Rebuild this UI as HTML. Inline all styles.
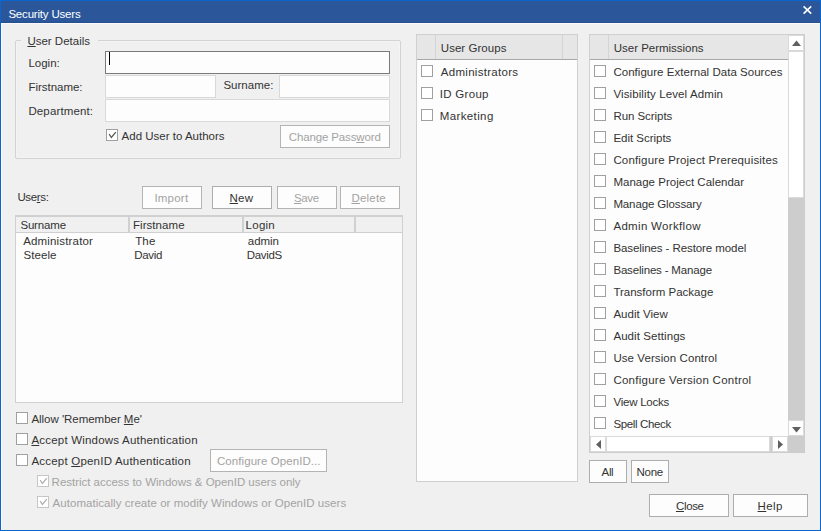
<!DOCTYPE html>
<html><head><meta charset="utf-8"><style>
html,body{margin:0;padding:0;width:821px;height:531px;overflow:hidden;background:#f0f0f0}
body{position:relative;font-family:"Liberation Sans",sans-serif;font-size:11.5px}
.a{position:absolute;box-sizing:content-box}
.t{position:absolute;white-space:nowrap;line-height:14px}
u{text-decoration:underline;text-underline-offset:1px}
</style></head><body>
<div class="a" style="left:0px;top:0px;width:821px;height:531px;background:#f0f0f0;"></div>
<div class="a" style="left:0px;top:0px;width:821px;height:1px;background:#0a66cc;"></div>
<div class="a" style="left:0px;top:0px;width:1px;height:531px;background:#0a66cc;"></div>
<div class="a" style="left:820px;top:0px;width:1px;height:531px;background:#0a66cc;"></div>
<div class="a" style="left:0px;top:530px;width:821px;height:1px;background:#0a66cc;"></div>
<div class="a" style="left:1px;top:1px;width:819px;height:22px;background:#2b579a;"></div>
<div class="a" style="left:1px;top:22px;width:819px;height:1px;background:#28508f;"></div>
<div class="a" style="left:1px;top:23px;width:819px;height:1px;background:#fbfbfb;"></div>
<div class="a" style="left:1px;top:23px;width:1px;height:507px;background:#fbfbfb;"></div>
<div class="t" id="t1" style="left:8.40px;top:6.81px;color:#fff;letter-spacing:-0.192px;">Security Users</div>
<svg class="a" style="left:802px;top:5px" width="11" height="10" viewBox="0 0 11 10"><path d="M1.6 1.4 L9.2 8.6 M9.2 1.4 L1.6 8.6" stroke="#fff" stroke-width="1.6" fill="none"/></svg>
<div class="a" style="left:15px;top:40px;width:384px;height:117px;border:1px solid #d3d3d3;border-radius:2px;box-shadow:inset 0 0 0 1px #f4f4f4"></div>
<div class="a" style="left:21px;top:39px;width:77px;height:3px;background:#f0f0f0;"></div>
<div class="t" id="t2" style="left:27.40px;top:34.01px;color:#333;"><u>U</u>ser Details</div>
<div class="t" id="t3" style="left:28.40px;top:56.01px;color:#333;">Login:</div>
<div class="a" style="left:105px;top:51px;width:283px;height:21px;border:1px solid #7a7a7a;background:#fdfdfd;"></div>
<div class="a" style="left:109px;top:52px;width:1px;height:13px;background:#000;"></div>
<div class="t" id="t4" style="left:28.40px;top:80.01px;color:#333;letter-spacing:-0.022px;">Firstname:</div>
<div class="a" style="left:105px;top:75px;width:109px;height:21px;border:1px solid #d9d9d9;background:#fdfdfd;"></div>
<div class="t" id="t5" style="left:223.40px;top:78.01px;color:#333;letter-spacing:0.029px;">Surname:</div>
<div class="a" style="left:279px;top:75px;width:109px;height:21px;border:1px solid #d9d9d9;background:#fdfdfd;"></div>
<div class="t" id="t6" style="left:28.40px;top:103.71px;color:#333;letter-spacing:0.140px;">Department:</div>
<div class="a" style="left:105px;top:99px;width:283px;height:21px;border:1px solid #d9d9d9;background:#fdfdfd;"></div>
<div class="a" style="left:106px;top:129px;width:10px;height:10px;border:1px solid #a0a0a0;background:#fff;"></div>
<svg class="a" style="left:106px;top:129px" width="12" height="12" viewBox="0 0 12 12"><path d="M3.2 5.2 L5.4 8.5 L9.8 3.2" fill="none" stroke="#555" stroke-width="1.25"/></svg>
<div class="t" id="t7" style="left:121.60px;top:128.81px;color:#333;letter-spacing:0.000px;">Add User to Authors</div>
<div class="a" style="left:280px;top:125px;width:108px;height:21px;border:1px solid #b4b4b4;background:#fdfdfd;"></div>
<div class="t" id="t8" style="left:288.80px;top:130.01px;color:#a3a3a3;letter-spacing:-0.143px;">Change Pass<u>w</u>ord</div>
<div class="t" id="t9" style="left:17.40px;top:190.21px;color:#333;letter-spacing:-0.350px;">Use<u>r</u>s:</div>
<div class="a" style="left:142px;top:186px;width:58px;height:21px;border:1px solid #b4b4b4;background:#fdfdfd;"></div>
<div class="t" id="t10" style="left:154.40px;top:190.61px;color:#a3a3a3;letter-spacing:0.220px;">Import</div>
<div class="a" style="left:212px;top:186px;width:58px;height:21px;border:1px solid #adadad;background:#fdfdfd;"></div>
<div class="t" id="t11" style="left:229.60px;top:190.71px;color:#333;letter-spacing:0.200px;"><u>N</u>ew</div>
<div class="a" style="left:277px;top:186px;width:58px;height:21px;border:1px solid #b4b4b4;background:#fdfdfd;"></div>
<div class="t" id="t12" style="left:294.00px;top:190.71px;color:#a3a3a3;letter-spacing:-0.350px;"><u>S</u>ave</div>
<div class="a" style="left:340px;top:186px;width:58px;height:21px;border:1px solid #b4b4b4;background:#fdfdfd;"></div>
<div class="t" id="t13" style="left:351.40px;top:190.71px;color:#a3a3a3;letter-spacing:0.220px;"><u>D</u>elete</div>
<div class="a" style="left:15px;top:215px;width:386px;height:186px;border:1px solid #d0d0d0;background:#fdfdfd;"></div>
<div class="a" style="left:16px;top:216px;width:386px;height:16px;background:#f0f0f0;"></div>
<div class="a" style="left:16px;top:216px;width:386px;height:1px;background:#d0d0d0;"></div>
<div class="a" style="left:16px;top:232px;width:386px;height:1px;background:#d0d0d0;"></div>
<div class="a" style="left:128px;top:216px;width:2px;height:17px;background:#d0d0d0;"></div>
<div class="a" style="left:242px;top:216px;width:2px;height:17px;background:#d0d0d0;"></div>
<div class="a" style="left:354px;top:216px;width:2px;height:17px;background:#d0d0d0;"></div>
<div class="t" id="t14" style="left:20.40px;top:217.71px;color:#333;letter-spacing:-0.167px;">Surname</div>
<div class="t" id="t15" style="left:133.00px;top:217.71px;color:#333;letter-spacing:0.050px;">Firstname</div>
<div class="t" id="t16" style="left:245.60px;top:217.71px;color:#333;letter-spacing:0.250px;">Login</div>
<div class="t" id="t17" style="left:23.20px;top:233.61px;color:#333;letter-spacing:0.167px;">Administrator</div>
<div class="t" id="t18" style="left:135.20px;top:233.61px;color:#333;letter-spacing:0.150px;">The</div>
<div class="t" id="t19" style="left:247.80px;top:233.61px;color:#333;letter-spacing:-0.050px;">admin</div>
<div class="t" id="t20" style="left:23.60px;top:248.21px;color:#333;letter-spacing:0.040px;">Steele</div>
<div class="t" id="t21" style="left:134.20px;top:248.21px;color:#333;letter-spacing:-0.325px;">David</div>
<div class="t" id="t22" style="left:246.80px;top:248.21px;color:#333;letter-spacing:-0.350px;">DavidS</div>
<div class="a" style="left:16px;top:412px;width:10px;height:10px;border:1px solid #a0a0a0;background:#fff;"></div>
<div class="t" id="t23" style="left:31.40px;top:411.81px;color:#333;letter-spacing:-0.031px;">Allow 'Remember <u>M</u>e'</div>
<div class="a" style="left:16px;top:433px;width:10px;height:10px;border:1px solid #a0a0a0;background:#fff;"></div>
<div class="t" id="t24" style="left:31.40px;top:432.91px;color:#333;letter-spacing:0.205px;"><u>A</u>ccept Windows Authentication</div>
<div class="a" style="left:16px;top:454px;width:10px;height:10px;border:1px solid #a0a0a0;background:#fff;"></div>
<div class="t" id="t25" style="left:31.40px;top:453.71px;color:#333;letter-spacing:0.213px;">Accept <u>O</u>penID Authentication</div>
<div class="a" style="left:210px;top:449px;width:115px;height:21px;border:1px solid #b4b4b4;background:#fdfdfd;"></div>
<div class="t" id="t26" style="left:217.00px;top:453.71px;color:#a3a3a3;letter-spacing:0.067px;">Confi<u>g</u>ure OpenID...</div>
<div class="a" style="left:37px;top:475px;width:10px;height:10px;border:1px solid #c6c6c6;background:#fff;"></div>
<svg class="a" style="left:37px;top:475px" width="12" height="12" viewBox="0 0 12 12"><path d="M3.2 5.2 L5.4 8.5 L9.8 3.2" fill="none" stroke="#b0b0b0" stroke-width="1.25"/></svg>
<div class="t" id="t27" style="left:51.60px;top:474.71px;color:#a3a3a3;letter-spacing:-0.020px;">Restrict access to Windows &amp; OpenID users only</div>
<div class="a" style="left:37px;top:496px;width:10px;height:10px;border:1px solid #c6c6c6;background:#fff;"></div>
<svg class="a" style="left:37px;top:496px" width="12" height="12" viewBox="0 0 12 12"><path d="M3.2 5.2 L5.4 8.5 L9.8 3.2" fill="none" stroke="#b0b0b0" stroke-width="1.25"/></svg>
<div class="t" id="t28" style="left:52.60px;top:495.71px;color:#a3a3a3;letter-spacing:0.040px;">Automatically create or modify Windows or OpenID users</div>
<div class="a" style="left:416px;top:34px;width:160px;height:446px;border:1px solid #d0d0d0;background:#fdfdfd;"></div>
<div class="a" style="left:417px;top:35px;width:160px;height:24px;background:#e6e6e6;"></div>
<div class="a" style="left:417px;top:59px;width:160px;height:1px;background:#a8a8a8;"></div>
<div class="a" style="left:435px;top:35px;width:1px;height:24px;background:#d4d4d4;"></div>
<div class="a" style="left:562px;top:35px;width:1px;height:24px;background:#d4d4d4;"></div>
<div class="t" id="t29" style="left:440.80px;top:40.71px;color:#333;letter-spacing:0.040px;">User Groups</div>
<div class="a" style="left:421px;top:65px;width:10px;height:10px;border:1px solid #a0a0a0;background:#fff;"></div>
<div class="t" id="t30" style="left:440.80px;top:64.91px;color:#333;letter-spacing:0.292px;">Administrators</div>
<div class="a" style="left:421px;top:87px;width:10px;height:10px;border:1px solid #a0a0a0;background:#fff;"></div>
<div class="t" id="t31" style="left:439.80px;top:86.91px;color:#333;letter-spacing:0.286px;">ID Group</div>
<div class="a" style="left:421px;top:109px;width:10px;height:10px;border:1px solid #a0a0a0;background:#fff;"></div>
<div class="t" id="t32" style="left:439.80px;top:108.91px;color:#333;letter-spacing:0.375px;">Marketing</div>
<div class="a" style="left:589px;top:34px;width:214px;height:417px;border:1px solid #d0d0d0;background:#fdfdfd;"></div>
<div class="a" style="left:590px;top:35px;width:198px;height:24px;background:#e6e6e6;"></div>
<div class="a" style="left:590px;top:59px;width:198px;height:1px;background:#a8a8a8;"></div>
<div class="a" style="left:608px;top:35px;width:1px;height:24px;background:#d4d4d4;"></div>
<div class="t" id="t33" style="left:613.80px;top:40.61px;color:#333;letter-spacing:-0.027px;">User Permissions</div>
<div class="a" style="left:594px;top:65px;width:10px;height:10px;border:1px solid #a0a0a0;background:#fff;"></div>
<div class="t" id="t34" style="left:613.40px;top:64.91px;color:#333;letter-spacing:0.030px;">Configure External Data Sources</div>
<div class="a" style="left:594px;top:87px;width:10px;height:10px;border:1px solid #a0a0a0;background:#fff;"></div>
<div class="t" id="t35" style="left:613.40px;top:86.91px;color:#333;letter-spacing:0.114px;">Visibility Level Admin</div>
<div class="a" style="left:594px;top:109px;width:10px;height:10px;border:1px solid #a0a0a0;background:#fff;"></div>
<div class="t" id="t36" style="left:613.40px;top:108.91px;color:#333;letter-spacing:-0.050px;">Run Scripts</div>
<div class="a" style="left:594px;top:131px;width:10px;height:10px;border:1px solid #a0a0a0;background:#fff;"></div>
<div class="t" id="t37" style="left:613.40px;top:130.91px;color:#333;letter-spacing:-0.018px;">Edit Scripts</div>
<div class="a" style="left:594px;top:153px;width:10px;height:10px;border:1px solid #a0a0a0;background:#fff;"></div>
<div class="t" id="t38" style="left:613.40px;top:152.91px;color:#333;letter-spacing:0.173px;">Configure Project Prerequisites</div>
<div class="a" style="left:594px;top:175px;width:10px;height:10px;border:1px solid #a0a0a0;background:#fff;"></div>
<div class="t" id="t39" style="left:613.40px;top:174.91px;color:#333;letter-spacing:0.014px;">Manage Project Calendar</div>
<div class="a" style="left:594px;top:197px;width:10px;height:10px;border:1px solid #a0a0a0;background:#fff;"></div>
<div class="t" id="t40" style="left:613.40px;top:196.91px;color:#333;letter-spacing:-0.121px;">Manage Glossary</div>
<div class="a" style="left:594px;top:219px;width:10px;height:10px;border:1px solid #a0a0a0;background:#fff;"></div>
<div class="t" id="t41" style="left:613.40px;top:218.91px;color:#333;letter-spacing:0.323px;">Admin Workflow</div>
<div class="a" style="left:594px;top:241px;width:10px;height:10px;border:1px solid #a0a0a0;background:#fff;"></div>
<div class="t" id="t42" style="left:613.40px;top:240.91px;color:#333;letter-spacing:-0.083px;">Baselines - Restore model</div>
<div class="a" style="left:594px;top:263px;width:10px;height:10px;border:1px solid #a0a0a0;background:#fff;"></div>
<div class="t" id="t43" style="left:613.40px;top:262.91px;color:#333;letter-spacing:-0.176px;">Baselines - Manage</div>
<div class="a" style="left:594px;top:285px;width:10px;height:10px;border:1px solid #a0a0a0;background:#fff;"></div>
<div class="t" id="t44" style="left:613.40px;top:284.91px;color:#333;">Transform Package</div>
<div class="a" style="left:594px;top:307px;width:10px;height:10px;border:1px solid #a0a0a0;background:#fff;"></div>
<div class="t" id="t45" style="left:613.40px;top:306.91px;color:#333;letter-spacing:0.033px;">Audit View</div>
<div class="a" style="left:594px;top:329px;width:10px;height:10px;border:1px solid #a0a0a0;background:#fff;"></div>
<div class="t" id="t46" style="left:613.40px;top:328.91px;color:#333;letter-spacing:0.077px;">Audit Settings</div>
<div class="a" style="left:594px;top:351px;width:10px;height:10px;border:1px solid #a0a0a0;background:#fff;"></div>
<div class="t" id="t47" style="left:613.40px;top:350.91px;color:#333;letter-spacing:0.078px;">Use Version Control</div>
<div class="a" style="left:594px;top:373px;width:10px;height:10px;border:1px solid #a0a0a0;background:#fff;"></div>
<div class="t" id="t48" style="left:613.40px;top:372.91px;color:#333;letter-spacing:0.254px;">Configure Version Control</div>
<div class="a" style="left:594px;top:395px;width:10px;height:10px;border:1px solid #a0a0a0;background:#fff;"></div>
<div class="t" id="t49" style="left:613.40px;top:394.91px;color:#333;letter-spacing:-0.222px;">View Locks</div>
<div class="a" style="left:594px;top:417px;width:10px;height:10px;border:1px solid #a0a0a0;background:#fff;"></div>
<div class="t" id="t50" style="left:613.40px;top:416.91px;color:#333;letter-spacing:-0.350px;">Spell Check</div>
<div class="a" style="left:788px;top:34px;width:17px;height:419px;background:#cdcdcd;"></div>
<div class="a" style="left:788px;top:35px;width:14px;height:14px;border:1px solid #dadada;background:#fff;"></div>
<svg class="a" style="left:789px;top:35px" width="15" height="16"><path d="M3 11 L12 11 L7.5 5.5 Z" fill="#606060"/></svg>
<div class="a" style="left:788px;top:51px;width:14px;height:145px;border:1px solid #dadada;background:#fff;"></div>
<div class="a" style="left:788px;top:420px;width:14px;height:14px;border:1px solid #dadada;background:#fff;"></div>
<svg class="a" style="left:789px;top:420px" width="15" height="16"><path d="M3 7 L12 7 L7.5 12.5 Z" fill="#606060"/></svg>
<div class="a" style="left:589px;top:436px;width:216px;height:17px;background:#cdcdcd;"></div>
<div class="a" style="left:590px;top:436px;width:14px;height:14px;border:1px solid #dadada;background:#fff;"></div>
<svg class="a" style="left:591px;top:437px" width="15" height="15"><path d="M5 7.5 L10 3 L10 12 Z" fill="#606060"/></svg>
<div class="a" style="left:606px;top:436px;width:162px;height:14px;border:1px solid #dadada;background:#fff;"></div>
<div class="a" style="left:772px;top:436px;width:14px;height:14px;border:1px solid #dadada;background:#fff;"></div>
<svg class="a" style="left:772px;top:437px" width="15" height="15"><path d="M6 3 L11 7.5 L6 12 Z" fill="#606060"/></svg>
<div class="a" style="left:589px;top:460px;width:36px;height:21px;border:1px solid #adadad;background:#fdfdfd;"></div>
<div class="t" id="t51" style="left:601.60px;top:465.01px;color:#333;letter-spacing:-0.350px;">All</div>
<div class="a" style="left:631px;top:460px;width:36px;height:21px;border:1px solid #adadad;background:#fdfdfd;"></div>
<div class="t" id="t52" style="left:636.40px;top:465.01px;color:#333;letter-spacing:-0.233px;">None</div>
<div class="a" style="left:649px;top:494px;width:78px;height:21px;border:1px solid #adadad;background:#fdfdfd;"></div>
<div class="t" id="t53" style="left:676.00px;top:499.11px;color:#333;letter-spacing:-0.350px;"><u>C</u>lose</div>
<div class="a" style="left:733px;top:494px;width:73px;height:21px;border:1px solid #adadad;background:#fdfdfd;"></div>
<div class="t" id="t54" style="left:757.60px;top:499.11px;color:#333;letter-spacing:0.367px;"><u>H</u>elp</div>
</body></html>
